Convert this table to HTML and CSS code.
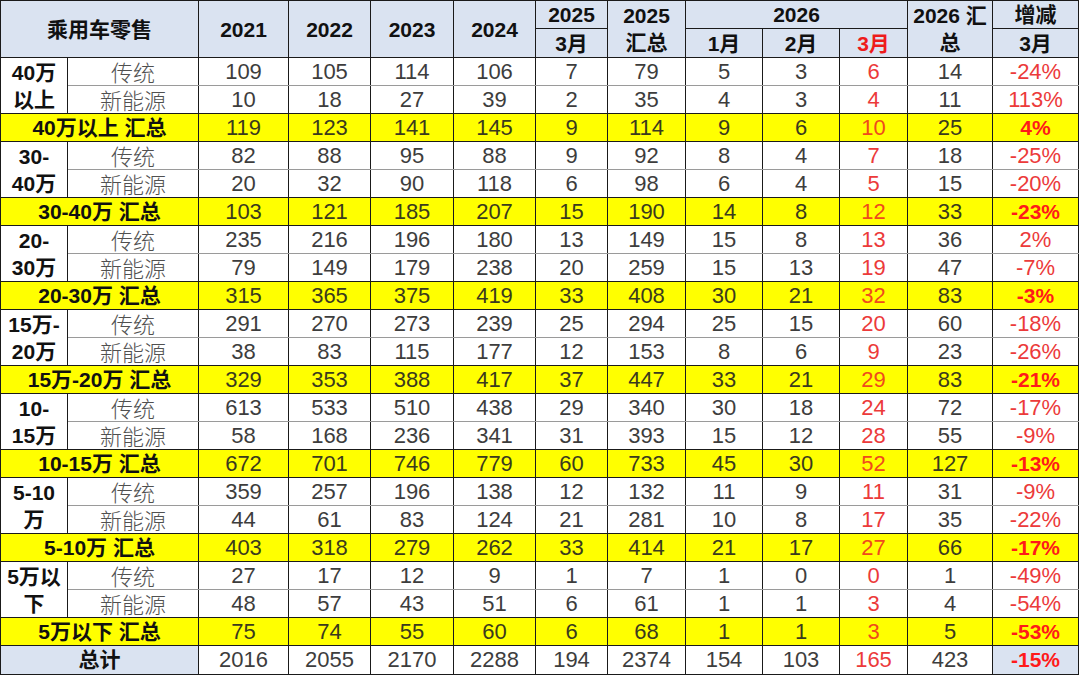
FILE: index.html
```html
<!DOCTYPE html>
<html lang="zh">
<head>
<meta charset="utf-8">
<link rel="stylesheet" href="styles.css">
</head>
<body>
<table class="sheet">
<colgroup>
<col class="c-grp"><col class="c-typ"><col class="c-y"><col class="c-y2"><col class="c-y3"><col class="c-y2"><col class="c-m"><col class="c-t"><col class="c-m2"><col class="c-m2"><col class="c-m3"><col class="c-t2"><col class="c-p">
</colgroup>
<thead>
<tr class="h1">
<th colspan="2" rowspan="2">乘用车零售</th>
<th rowspan="2">2021</th><th rowspan="2">2022</th><th rowspan="2">2023</th><th rowspan="2">2024</th>
<th>2025</th>
<th rowspan="2">2025<br>汇总</th>
<th colspan="3">2026</th>
<th rowspan="2">2026 汇总</th>
<th>增减</th>
</tr>
<tr class="h2">
<th>3月</th><th>1月</th><th>2月</th><th class="hr">3月</th><th>3月</th>
</tr>
</thead>
<tbody>
<tr class="t1"><td class="grp" rowspan="2">40万<br>以上</td><td class="typ">传统</td><td>109</td><td>105</td><td>114</td><td>106</td><td>7</td><td>79</td><td>5</td><td>3</td><td class="r">6</td><td>14</td><td class="r">-24%</td></tr>
<tr class="t2"><td class="typ">新能源</td><td>10</td><td>18</td><td>27</td><td>39</td><td>2</td><td>35</td><td>4</td><td>3</td><td class="r">4</td><td>11</td><td class="r">113%</td></tr>
<tr class="sub"><td class="lbl" colspan="2">40万以上 汇总</td><td>119</td><td>123</td><td>141</td><td>145</td><td>9</td><td>114</td><td>9</td><td>6</td><td class="r">10</td><td>25</td><td class="p">4%</td></tr>

<tr class="t1"><td class="grp" rowspan="2">30-<br>40万</td><td class="typ">传统</td><td>82</td><td>88</td><td>95</td><td>88</td><td>9</td><td>92</td><td>8</td><td>4</td><td class="r">7</td><td>18</td><td class="r">-25%</td></tr>
<tr class="t2"><td class="typ">新能源</td><td>20</td><td>32</td><td>90</td><td>118</td><td>6</td><td>98</td><td>6</td><td>4</td><td class="r">5</td><td>15</td><td class="r">-20%</td></tr>
<tr class="sub"><td class="lbl" colspan="2">30-40万 汇总</td><td>103</td><td>121</td><td>185</td><td>207</td><td>15</td><td>190</td><td>14</td><td>8</td><td class="r">12</td><td>33</td><td class="p">-23%</td></tr>

<tr class="t1"><td class="grp" rowspan="2">20-<br>30万</td><td class="typ">传统</td><td>235</td><td>216</td><td>196</td><td>180</td><td>13</td><td>149</td><td>15</td><td>8</td><td class="r">13</td><td>36</td><td class="r">2%</td></tr>
<tr class="t2"><td class="typ">新能源</td><td>79</td><td>149</td><td>179</td><td>238</td><td>20</td><td>259</td><td>15</td><td>13</td><td class="r">19</td><td>47</td><td class="r">-7%</td></tr>
<tr class="sub"><td class="lbl" colspan="2">20-30万 汇总</td><td>315</td><td>365</td><td>375</td><td>419</td><td>33</td><td>408</td><td>30</td><td>21</td><td class="r">32</td><td>83</td><td class="p">-3%</td></tr>

<tr class="t1"><td class="grp" rowspan="2">15万-<br>20万</td><td class="typ">传统</td><td>291</td><td>270</td><td>273</td><td>239</td><td>25</td><td>294</td><td>25</td><td>15</td><td class="r">20</td><td>60</td><td class="r">-18%</td></tr>
<tr class="t2"><td class="typ">新能源</td><td>38</td><td>83</td><td>115</td><td>177</td><td>12</td><td>153</td><td>8</td><td>6</td><td class="r">9</td><td>23</td><td class="r">-26%</td></tr>
<tr class="sub"><td class="lbl" colspan="2">15万-20万 汇总</td><td>329</td><td>353</td><td>388</td><td>417</td><td>37</td><td>447</td><td>33</td><td>21</td><td class="r">29</td><td>83</td><td class="p">-21%</td></tr>

<tr class="t1"><td class="grp" rowspan="2">10-<br>15万</td><td class="typ">传统</td><td>613</td><td>533</td><td>510</td><td>438</td><td>29</td><td>340</td><td>30</td><td>18</td><td class="r">24</td><td>72</td><td class="r">-17%</td></tr>
<tr class="t2"><td class="typ">新能源</td><td>58</td><td>168</td><td>236</td><td>341</td><td>31</td><td>393</td><td>15</td><td>12</td><td class="r">28</td><td>55</td><td class="r">-9%</td></tr>
<tr class="sub"><td class="lbl" colspan="2">10-15万 汇总</td><td>672</td><td>701</td><td>746</td><td>779</td><td>60</td><td>733</td><td>45</td><td>30</td><td class="r">52</td><td>127</td><td class="p">-13%</td></tr>

<tr class="t1"><td class="grp" rowspan="2">5-10<br>万</td><td class="typ">传统</td><td>359</td><td>257</td><td>196</td><td>138</td><td>12</td><td>132</td><td>11</td><td>9</td><td class="r">11</td><td>31</td><td class="r">-9%</td></tr>
<tr class="t2"><td class="typ">新能源</td><td>44</td><td>61</td><td>83</td><td>124</td><td>21</td><td>281</td><td>10</td><td>8</td><td class="r">17</td><td>35</td><td class="r">-22%</td></tr>
<tr class="sub"><td class="lbl" colspan="2">5-10万 汇总</td><td>403</td><td>318</td><td>279</td><td>262</td><td>33</td><td>414</td><td>21</td><td>17</td><td class="r">27</td><td>66</td><td class="p">-17%</td></tr>

<tr class="t1"><td class="grp" rowspan="2">5万以<br>下</td><td class="typ">传统</td><td>27</td><td>17</td><td>12</td><td>9</td><td>1</td><td>7</td><td>1</td><td>0</td><td class="r">0</td><td>1</td><td class="r">-49%</td></tr>
<tr class="t2"><td class="typ">新能源</td><td>48</td><td>57</td><td>43</td><td>51</td><td>6</td><td>61</td><td>1</td><td>1</td><td class="r">3</td><td>4</td><td class="r">-54%</td></tr>
<tr class="sub"><td class="lbl" colspan="2">5万以下 汇总</td><td>75</td><td>74</td><td>55</td><td>60</td><td>6</td><td>68</td><td>1</td><td>1</td><td class="r">3</td><td>5</td><td class="p">-53%</td></tr>

<tr class="total"><td class="lbl tl" colspan="2">总计</td><td>2016</td><td>2055</td><td>2170</td><td>2288</td><td>194</td><td>2374</td><td>154</td><td>103</td><td class="r">165</td><td>423</td><td class="p tl">-15%</td></tr>
</tbody>
</table>
</body>
</html>
```
FILE: styles.css
```css
html, body {
  margin: 0;
  padding: 0;
  background: #ffffff;
}

.sheet {
  border-collapse: collapse;
  table-layout: fixed;
  width: 1078px;
  font-family: "Liberation Sans", "Noto Sans CJK SC", sans-serif;
}

.c-grp { width: 67px; }
.c-typ { width: 131px; }
.c-y { width: 90px; }
.c-y2 { width: 82px; }
.c-y3 { width: 83px; }
.c-m { width: 72px; }
.c-t { width: 78px; }
.c-m2 { width: 77px; }
.c-m3 { width: 68px; }
.c-t2 { width: 85px; }
.c-p { width: 86px; }

.sheet th,
.sheet td {
  border: 1px solid #1a1a1a;
  padding: 0;
  text-align: center;
  vertical-align: middle;
  line-height: 22px;
  overflow: hidden;
  white-space: nowrap;
}

.sheet th {
  background: #dae3f1;
  color: #111111;
  font-weight: bold;
  font-size: 21px;
  line-height: 27px;
  white-space: normal;
}

.h1 { height: 28px; }
.h2 { height: 29px; }

.sheet th.hr { color: #ee1c1c; }

.sheet tbody tr { height: 28px; }
.sheet tbody tr.total { height: 29px; }

.sheet td {
  font-size: 22px;
  color: #3d3d3d;
}

.sheet td.typ {
  font-family: "Noto Sans CJK SC", sans-serif;
  font-weight: 300;
  font-size: 22px;
  line-height: 24px;
  padding-bottom: 2px;
  color: #505050;
}

.sheet td.grp {
  font-weight: bold;
  font-size: 21px;
  line-height: 27px;
  color: #111111;
  white-space: normal;
}

.sheet td.r { color: #ec3a3a; }

.t1 td:not(.grp) { border-bottom-color: #9a9a9a; }
.t2 td { border-top-color: #9a9a9a; }

.sub td {
  background: #ffff00;
  color: #3a3a1e;
}

.sub td.r { color: #f04a1c; }

.sheet td.lbl {
  font-weight: bold;
  font-size: 21px;
  color: #111111;
}

.sheet td.p {
  font-weight: bold;
  font-size: 21px;
  color: #ff1a1a;
}

.sheet td.tl { background: #dae3f1; }
```
